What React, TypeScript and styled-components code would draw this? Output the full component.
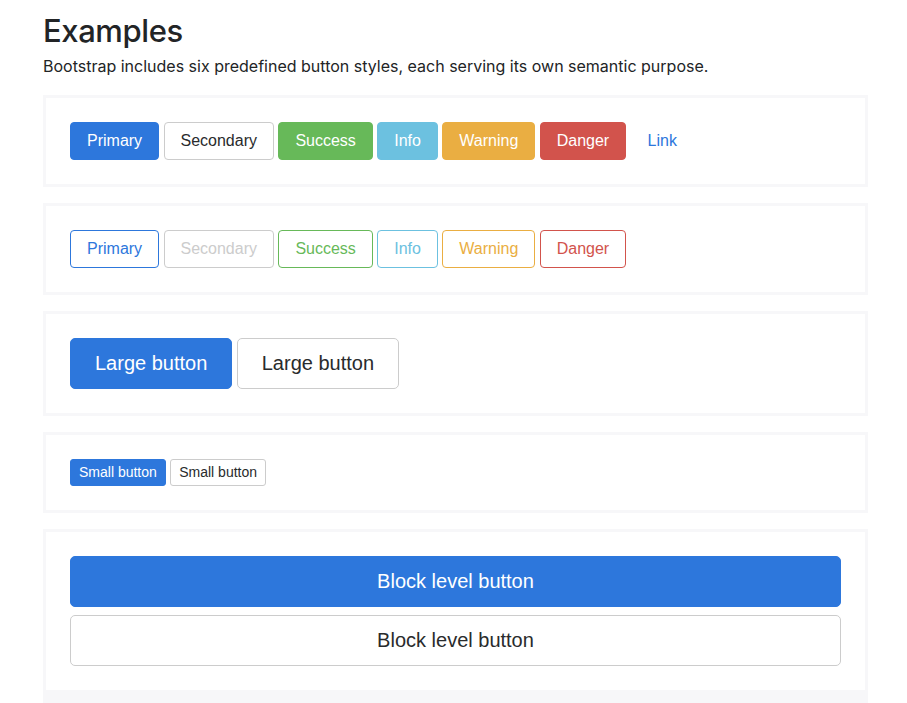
import React from "react";
import styled, { createGlobalStyle, css } from "styled-components";

const GlobalStyle = createGlobalStyle`
  html, body { margin: 0; padding: 0; background: #fff; }
  body {
    font-family: "Liberation Sans", Arial, Helvetica, sans-serif;
    font-size: 16px;
    line-height: 1.5;
    color: #292b2c;
  }
  * { box-sizing: border-box; }
`;

const colors: Record<string, string> = {
  primary: "#2d77dc",
  secondary: "#cccccc",
  success: "#67b959",
  info: "#6cc1e0",
  warning: "#eaae42",
  danger: "#d2534c",
};

type Variant = "primary" | "secondary" | "success" | "info" | "warning" | "danger" | "link";
type Size = "sm" | "md" | "lg";

const Page = styled.main`
  padding: 0 0 0 43px;
  width: 868px;
`;

const Title = styled.h2`
  font-family: Inter, "Liberation Sans", sans-serif;
  font-size: 31px;
  font-weight: 500;
  letter-spacing: -0.4px;
  line-height: 1.1;
  margin: 13.5px 0 6.5px;
  color: #222426;
`;

const Lead = styled.p`
  font-family: Inter, "Liberation Sans", sans-serif;
  font-size: 16px;
  margin: 0 0 17px;
  color: #222426;
`;

const Example = styled.div<{ $flush?: boolean }>`
  border: 3px solid #f7f7f9;
  padding: 24px;
  margin-bottom: ${(p) => (p.$flush ? "0" : "16px")};
`;

const Row = styled.div`
  display: flex;
  align-items: center;
  gap: 4.4px;
`;

const Stack = styled.div`
  display: flex;
  flex-direction: column;
  gap: 8px;
`;

const Highlight = styled.div`
  background: #f7f7f9;
  height: 40px;
`;

const sizes = {
  sm: css`
    padding: 4px 8px;
    font-size: 14px;
    line-height: 1.2;
    border-radius: 3px;
  `,
  md: css`
    padding: 8px 16px;
    font-size: 16px;
    line-height: 1.25;
    border-radius: 4px;
  `,
  lg: css`
    padding: 12px 24px;
    font-size: 20px;
    line-height: 1.25;
    border-radius: 5px;
  `,
};

const Button = styled.button<{ $variant: Variant; $outline?: boolean; $size?: Size; $block?: boolean }>`
  font-family: "Liberation Sans", Arial, Helvetica, sans-serif;
  font-weight: 400;
  text-align: center;
  white-space: nowrap;
  cursor: pointer;
  border: 1px solid transparent;
  ${(p) => sizes[p.$size || "md"]}
  ${(p) => (p.$block ? "display: block; width: 100%;" : "display: inline-block;")}
  ${(p) => {
    if (p.$variant === "link") {
      return css`
        background: transparent;
        color: ${colors.primary};
        border-color: transparent;
      `;
    }
    const c = colors[p.$variant];
    if (p.$outline) {
      return css`
        background: transparent;
        color: ${c};
        border-color: ${c};
      `;
    }
    if (p.$variant === "secondary") {
      return css`
        background: #fff;
        color: #292b2c;
        border-color: #ccc;
      `;
    }
    return css`
      background: ${c};
      color: #fff;
      border-color: ${c};
    `;
  }}
`;

const variants: { v: Variant; label: string }[] = [
  { v: "primary", label: "Primary" },
  { v: "secondary", label: "Secondary" },
  { v: "success", label: "Success" },
  { v: "info", label: "Info" },
  { v: "warning", label: "Warning" },
  { v: "danger", label: "Danger" },
];

export default function App() {
  return (
    <>
      <GlobalStyle />
      <Page>
        <Title>Examples</Title>
        <Lead>Bootstrap includes six predefined button styles, each serving its own semantic purpose.</Lead>

        <Example>
          <Row>
            {variants.map((b) => (
              <Button key={b.v} $variant={b.v}>
                {b.label}
              </Button>
            ))}
            <Button $variant="link">Link</Button>
          </Row>
        </Example>

        <Example>
          <Row>
            {variants.map((b) => (
              <Button key={b.v} $variant={b.v} $outline>
                {b.label}
              </Button>
            ))}
          </Row>
        </Example>

        <Example>
          <Row>
            <Button $variant="primary" $size="lg">Large button</Button>
            <Button $variant="secondary" $size="lg">Large button</Button>
          </Row>
        </Example>

        <Example>
          <Row>
            <Button $variant="primary" $size="sm">Small button</Button>
            <Button $variant="secondary" $size="sm">Small button</Button>
          </Row>
        </Example>

        <Example $flush>
          <Stack>
            <Button $variant="primary" $size="lg" $block>Block level button</Button>
            <Button $variant="secondary" $size="lg" $block>Block level button</Button>
          </Stack>
        </Example>
        <Highlight />
      </Page>
    </>
  );
}
